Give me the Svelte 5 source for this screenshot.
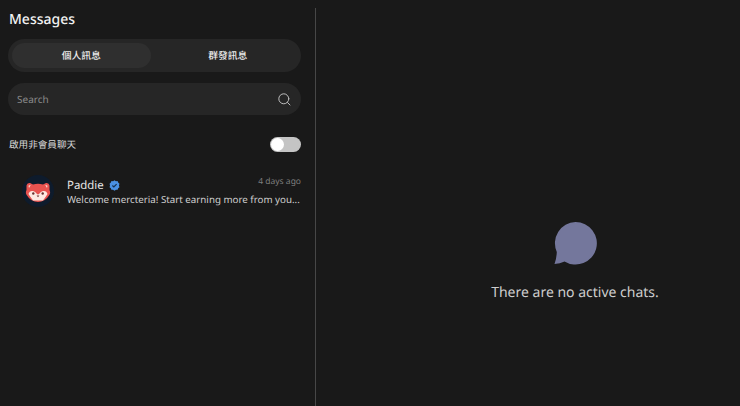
<script>
  const tabs = [
    { label: '個人訊息', active: true },
    { label: '群發訊息', active: false }
  ];
</script>

<div class="page">
  <aside class="side">
    <h1>Messages</h1>
    <div class="tabs">
      {#each tabs as t}
        <div class="tab" class:active={t.active}>{t.label}</div>
      {/each}
    </div>
    <div class="search">
      <span>Search</span>
      <svg width="13" height="13" viewBox="0 0 13 13" fill="none" stroke="#bdbdbd" stroke-width="1" stroke-linecap="round">
        <circle cx="5.800" cy="5.800" r="5" />
        <path d="M9.500 9.500 12 12" />
      </svg>
    </div>
    <div class="toggle-row">
      <span>啟用非會員聊天</span>
      <div class="switch"><div class="knob"></div></div>
    </div>
    <div class="chat">
      <div class="avatar">
        <svg width="32" height="32" viewBox="0 0 32 32">
          <circle cx="16" cy="16" r="16" fill="#0e1b2c" />
          <path d="M4.500 10.500Q5 7.500 8 8L11 9.500Q16 8 21 9.500L24 8Q27 7.500 27.500 10.500L27.500 15Q29 18 27 20.500 23 27 16 27 9 27 5 20.500 3 18 4.500 15Z" fill="#e8524f" />
          <path d="M6.500 10.800 8.800 9.800 7 13ZM25.500 10.800 23.200 9.800 25 13Z" fill="#fbe3dc" />
          <path d="M6.500 19Q7.500 15.500 11 16 13.500 16.500 14.500 18.500 15.500 19.500 16 19.500 16.500 19.500 17.500 18.500 18.500 16.500 21 16 24.500 15.500 25.500 19 24 21.500 21 25.500 16 25.500 11 25.500 8 21.500 6.500 19Z" fill="#fde9e2" />
          <circle cx="11.300" cy="18.500" r="1.200" fill="#6a3230" />
          <circle cx="20.700" cy="18.500" r="1.200" fill="#6a3230" />
          <path d="M14.600 20.500h2.800L16 22.300Z" fill="#6a3230" />
        </svg>
      </div>
      <div class="body">
        <div class="top">
          <div class="name">
            Paddie
            <svg width="11" height="11" viewBox="0 0 12 12">
              <path d="M6 .4 7.500 1.300 9.300 1.200 10 2.800 11.400 4 10.900 5.900 11.400 7.800 10 8.900 9.400 10.600 7.600 10.600 6 11.600 4.400 10.600 2.600 10.600 2 8.900 .6 7.800 1.100 5.900 .6 4 2 2.800 2.700 1.200 4.500 1.300Z" fill="#4a90e2" />
              <path d="M3.700 6 5.300 7.600 8.300 4.500" fill="none" stroke="#14304f" stroke-width="1.300" />
            </svg>
          </div>
          <span class="time">4 days ago</span>
        </div>
        <div class="preview">Welcome mercteria! Start earning more from you...</div>
      </div>
    </div>
  </aside>
  <div class="divider"></div>
  <main class="empty">
    <div class="empty-center">
      <svg width="44" height="44" viewBox="0 0 44 44">
        <path d="M22.500 1A21.300 21.300 0 1 1 11.500 40.500Q7 42.500 1.500 43 3.500 38 3.800 31A21.300 21.300 0 0 1 22.500 1Z" fill="#74779c" />
      </svg>
      <p>There are no active chats.</p>
    </div>
  </main>
</div>

<style>
  :global(body) {
    margin: 0;
    background: #191919;
  }
  .page {
    display: flex;
    width: 740px;
    height: 406px;
    overflow: hidden;
    background: #191919;
    font-family: "Noto Sans", "Noto Sans CJK TC", sans-serif;
    color: #f0f0f0;
    text-rendering: geometricPrecision;
  }
  .side {
    box-sizing: border-box;
    width: 315px;
    flex: none;
    padding: 8px 14px 0 8px;
  }
  h1 {
    margin: 0;
    padding-left: 1px;
    font-size: 14px;
    line-height: 23px;
    font-weight: 500;
    color: #f2f2f2;
  }
  .tabs {
    display: flex;
    gap: 8px;
    box-sizing: border-box;
    height: 33px;
    margin-top: 8px;
    padding: 4px;
    border-radius: 17px;
    background: #262626;
  }
  .tab {
    flex: 1;
    text-align: center;
    font-size: 9.800px;
    line-height: 26px;
    height: 25px;
    font-weight: 500;
    border-radius: 13px;
    color: #ececec;
  }
  .active {
    background: #2f2f2f;
  }
  .search {
    display: flex;
    align-items: center;
    justify-content: space-between;
    box-sizing: border-box;
    height: 32px;
    margin-top: 11px;
    padding: 0 10px 0 9px;
    border-radius: 16px;
    background: #262626;
    font-size: 10px;
    color: #8a8a8a;
  }
  .toggle-row {
    display: flex;
    align-items: center;
    justify-content: space-between;
    margin-top: 19px;
    height: 20px;
    padding-left: 1px;
    font-size: 9.600px;
    color: #d8d8d8;
  }
  .switch {
    width: 31px;
    height: 15px;
    border-radius: 8px;
    background: #c4c4c4;
    position: relative;
  }
  .knob {
    position: absolute;
    left: 1px;
    top: 1px;
    width: 13px;
    height: 13px;
    border-radius: 50%;
    background: #fff;
  }
  .chat {
    display: flex;
    align-items: center;
    gap: 13px;
    margin-top: 21px;
    padding-left: 14px;
  }
  .avatar {
    display: flex;
    flex: none;
  }
  .body {
    flex: 1;
    min-width: 0;
    padding-top: 2px;
  }
  .top {
    display: flex;
    justify-content: space-between;
    align-items: flex-start;
    height: 15px;
  }
  .name {
    display: flex;
    align-items: center;
    gap: 5px;
    font-size: 11.400px;
    line-height: 16px;
    color: #e6e6e6;
  }
  .time {
    font-size: 8.500px;
    line-height: 8px;
    color: #7e7e7e;
  }
  .preview {
    font-size: 9.750px;
    line-height: 14px;
    color: #cfcfcf;
    white-space: nowrap;
  }
  .divider {
    flex: none;
    width: 1px;
    margin-top: 8px;
    background: #474747;
  }
  .empty {
    flex: 1;
    min-width: 0;
    padding-top: 221px;
  }
  .empty-center {
    display: flex;
    flex-direction: column;
    align-items: center;
    width: 518px;
  }
  .empty svg {
    display: block;
  }
  .empty p {
    margin: 18px 0 0;
    font-size: 14px;
    line-height: 20px;
    color: #cdcdcd;
  }
</style>
